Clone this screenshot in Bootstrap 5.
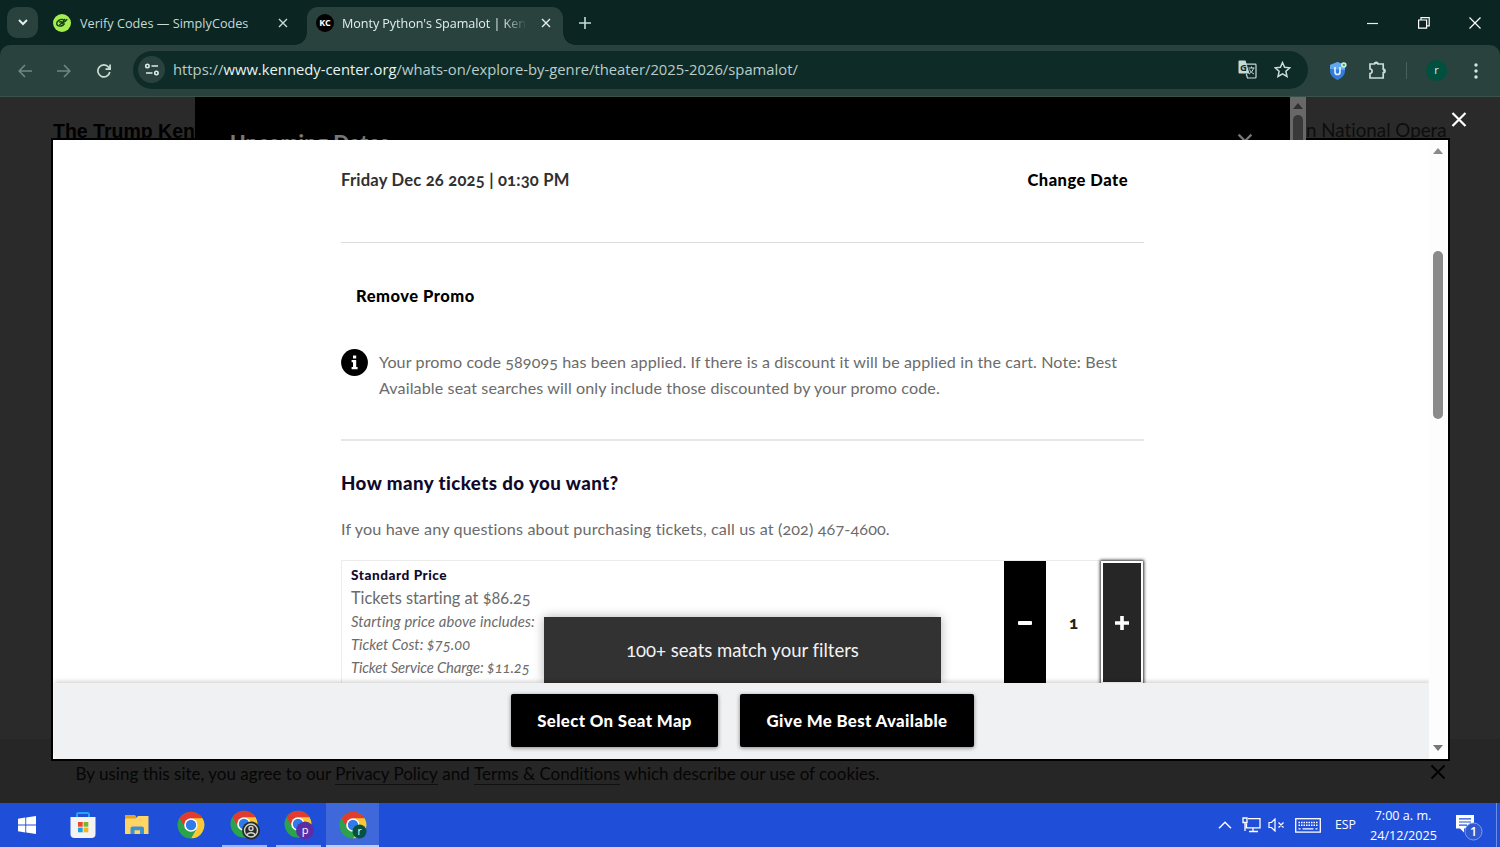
<!DOCTYPE html>
<html lang="en">
<head>
<meta charset="utf-8">
<meta name="viewport" content="width=device-width, initial-scale=1">
<title>Monty Python's Spamalot | Kennedy Center</title>
<link rel="stylesheet" href="https://cdn.jsdelivr.net/npm/bootstrap@5.3.0/dist/css/bootstrap.min.css">
<style>
  body { height: 847px; overflow: hidden; font-family: "Open Sans", "Noto Sans", sans-serif; white-space: nowrap; }
  svg { display: block; flex: none; }
  button { border: 0; }

  /* Browser chrome */
  .tabstrip { height: 45px; background: #0a2522; }
  .tab-menu { width: 31px; height: 31px; margin: 7px 0 0 7px; border-radius: 10px; background: #29423d; }
  .browser-tab { height: 38px; margin-top: 7px; font-size: 12.68px; line-height: 32px; color: #c5dbd5; }
  .tab-idle { width: 253px; margin-left: 8px; padding: 0 11px 0 7px; }
  .tab-active { width: 256px; margin-left: 8px; padding: 0 12px 0 9px; background: #29423d; color: #e2efeb; border-radius: 11px 11px 0 0; position: relative; }
  .tab-active::before, .tab-active::after { content: ""; position: absolute; bottom: 0; width: 12px; height: 12px; }
  .tab-active::before { left: -12px; background: radial-gradient(circle at 0 0, transparent 11.5px, #29423d 12px); }
  .tab-active::after { right: -12px; background: radial-gradient(circle at 100% 0, transparent 11.5px, #29423d 12px); }
  .tab-title { width: 186px; overflow: hidden; font-size: 12.6px; letter-spacing: -.06px; line-height: 33px; margin-left: 8px; -webkit-mask-image: linear-gradient(90deg, #000 160px, transparent 185px); mask-image: linear-gradient(90deg, #000 160px, transparent 185px); }
  .kc-icon { width: 18px; height: 18px; margin-top: 7px; border-radius: 50%; background: #000; color: #fff; font-size: 9px; font-weight: 700; line-height: 18px; text-align: center; }
  .toolbar-shell { height: 52px; background: #0a2522; }
  .browser-toolbar { height: 52px; background: #29423d; border-radius: 10px 10px 0 0; border-bottom: 1px solid #3a524d; }
  .address { width: 1175px; height: 38px; margin-left: 22px; margin-bottom: 2px; border-radius: 19px; background: #0f2b28; color: #b9cdc8; font-size: 14.8px; padding: 0 17px 0 5px; }
  .address strong { font-weight: 400; color: #e6f3ef; }
  .site-chip { width: 27px; height: 27px; border-radius: 50%; background: #29423d; }
  .profile { width: 21px; height: 21px; border-radius: 50%; background: #00503f; color: #dcece7; font-size: 11px; line-height: 20px; text-align: center; }
  .tool-rule { width: 1px; height: 17px; background: #49615c; }

  /* Dimmed page behind the dialog */
  .site { height: 706px; background: #2a2a2a; font-family: Lato, "Open Sans", sans-serif; font-variant-numeric: oldstyle-nums; font-variant-ligatures: none; }
  .site-head { height: 116px; }
  .brand { width: 195px; padding-left: 53px; padding-top: 20px; overflow: hidden; font: 700 19.5px/28px "Liberation Sans", Arial, sans-serif; color: #000; }
  .dates-panel { width: 1095px; height: 43px; overflow: hidden; background: #000; color: #777; padding: 30px 37px 0 35px; font-size: 21px; letter-spacing: .3px; font-weight: 900; line-height: 30px; }
  .dates-scroll { width: 16px; height: 43px; overflow: hidden; background: #686868; }
  .over-frame { position: relative; z-index: 2; }
  .dates-thumb { flex: none; width: 10px; height: 40px; border-radius: 5px 5px 0 0; background: #393939; margin-top: 6px; }
  .opera { padding-top: 19px; font-size: 18.76px; line-height: 28px; color: #0d0d0d; }
  .site-foot { height: 64px; background: #262626; padding: 25px 54px 0 75.5px; font-size: 17.03px; line-height: 28px; color: #050505; }
  .site-foot a { color: #050505; text-decoration: none; border-bottom: 1px solid #101010; display: inline-block; line-height: 20px; }

  /* Ticket dialog */
  .ticket-dialog { position: absolute; left: 51px; top: 138px; width: 1399px; height: 623px; border: 2px solid #000; background: #fff; color: #6b6b6b; }
  .dialog-close { position: absolute; left: 1451px; top: 111px; }
  .dialog-view { height: 543px; overflow: hidden; width: 1378px; }
  .ticket-column { width: 803px; margin-left: 288px; }
  .date-row { height: 103px; padding: 26px 16px 0 0; border-bottom: 1px solid #dcdcdc; font-size: 16.6px; letter-spacing: .2px; font-weight: 700; line-height: 28px; color: #303030; }
  .text-action { padding: 0; background: none; color: #000; font-size: 16.5px; letter-spacing: .5px; font-weight: 900; line-height: 28px; }
  .promo-row { height: 198px; border-bottom: 2px solid #e6e6e6; padding-top: 39px; }
  .promo-note { margin-top: 39px; gap: 11px; font-size: 16.1px; letter-spacing: .11px; line-height: 26.4px; }
  .ask { margin: 28px 0 0; font-size: 18.7px; letter-spacing: .43px; font-weight: 900; line-height: 28px; color: #0f0a2c; }
  .ask-note { margin: 19px 0 0; height: 44px; font-size: 16.2px; letter-spacing: .12px; line-height: 26px; }
  .price-box { height: 150px; border: 1px solid #ececec; }
  .price-text { padding-left: 9px; line-height: 23px; }
  .price-name { font-size: 13.6px; letter-spacing: .55px; font-weight: 900; line-height: 22px; color: #0f0a2c; padding-top: 3px; }
  .price-from { font-size: 16.36px; line-height: 24px; }
  .price-part { font-style: italic; line-height: 23.2px; font-size: 14.85px; }
  .step { width: 42px; height: 124px; background: #000; display: flex; align-items: center; justify-content: center; padding: 0; border-radius: 0; }
  .step-focus { background: #262626; width: 42px; height: 123px; border: 2px solid #fff; box-shadow: 0 0 3px 1px #333; }
  .qty { width: 55px; font-weight: 900; font-size: 17px; color: #222; text-align: center; line-height: 124px; }
  .seat-toast { position: absolute; left: 491px; top: 477px; width: 397px; height: 66px; background: #323232; color: #f2f2f2; font-size: 18.5px; line-height: 67px; text-align: center; box-shadow: 0 0 10px rgba(0,0,0,.3); }
  .dialog-foot { height: 76px; width: 1375px; margin-left: 2px; background: #eff1f3; box-shadow: 0 -2px 4px rgba(0,0,0,.16); position: relative; gap: 22px; padding-top: 11px; }
  .seat-btn { height: 53px; background: #000; color: #fff; border-radius: 2px; font-weight: 900; font-size: 16.8px; letter-spacing: .38px; padding: 1px 0 0; box-shadow: 0 1px 4px rgba(0,0,0,.45); }
  .view-scroll { position: absolute; right: 1px; top: 0; width: 18px; height: 619px; background: #fdfdfd; padding: 8px 0; }
  .view-thumb { width: 10px; height: 168px; border-radius: 5px; background: #8a8a8a; margin-top: 97px; }

  /* Taskbar */
  .taskbar { height: 44px; background: #1f4fd8; color: #fff; font-size: 12.5px; }
  .task-item { width: 53px; height: 44px; margin-right: 1px; display: flex; align-items: center; justify-content: center; }
  .task-open { border-bottom: 2px solid #9db8f3; padding-top: 2px; width: 45px; margin: 0 5px 0 4px; }
  .task-current { background: #3f69da; padding-top: 2px; border-bottom: 2px solid #bccdf7; }
  .clock { width: 66px; margin-left: 14px; text-align: center; line-height: 20px; font-size: 12.6px; padding-top: 1px; }
</style>
</head>
<body>
<svg width="0" height="0" class="position-absolute" aria-hidden="true">
  <symbol id="chrome" viewBox="0 0 28 28">
    <circle cx="14" cy="14" r="13.3" fill="#2ba24c"/>
    <path d="M14 14 2.5 7.3A13.3 13.3 0 0 1 25.5 7.3z" fill="#e33b2e"/>
    <path d="M14 7.3H25.5A13.3 13.3 0 0 1 14 27.3L19.8 17.3A6.7 6.7 0 0 0 14 7.3z" fill="#fcc934"/>
    <path d="M2.5 7.3 8.2 17.3 14 14 14 7.3z" fill="#e33b2e"/>
    <path d="M2.5 7.3A13.3 13.3 0 0 0 14 27.3L19.8 17.3 14 14 8.2 17.3z" fill="#2ba24c"/>
    <circle cx="14" cy="14" r="6.8" fill="#fff"/><circle cx="14" cy="14" r="5.2" fill="#2f7bea"/>
  </symbol>
  <symbol id="cross" viewBox="0 0 10 10"><path d="M1 1l8 8M9 1 1 9" stroke="currentColor" stroke-width="1.4" fill="none"/></symbol>
</svg>

<header>
  <div class="tabstrip d-flex">
    <div class="tab-menu d-flex align-items-center justify-content-center"><svg width="10" height="7" viewBox="0 0 10 7"><path d="M1 1l4 4 4-4" fill="none" stroke="#e2efeb" stroke-width="2"/></svg></div>
    <div class="browser-tab tab-idle d-flex">
      <svg width="18" height="18" viewBox="0 0 18 18" style="margin-top:7px"><circle cx="9" cy="9" r="9" fill="#a4ee4f"/><path d="M10.5 5.6C7 4.8 3.6 7 3.7 9.8c.2 3.1 6.1 3.2 7.8-.4M6.2 8.4c1.2-1 2.6-.8 3.6.2 1.6-.3 3.2-1.6 4.4-3.4M6.4 11l2.6-2 1.3 1.2M12 5l-2 2.5" fill="none" stroke="#173b1c" stroke-width="1.4"/></svg>
      <span style="margin-left:9px">Verify Codes — SimplyCodes</span>
      <svg class="ms-auto" width="10" height="10" style="margin-top:11px"><use href="#cross"/></svg>
    </div>
    <div class="browser-tab tab-active d-flex">
      <span class="kc-icon flex-shrink-0">KC</span>
      <span class="tab-title">Monty Python's Spamalot | Kenn</span>
      <svg class="ms-auto" width="10" height="10" style="margin-top:11px"><use href="#cross"/></svg>
    </div>
    <svg width="12" height="12" viewBox="0 0 12 12" style="margin:17px 0 0 16px"><path d="M6 0v12M0 6h12" stroke="#c5dbd5" stroke-width="1.6"/></svg>
    <div class="ms-auto d-flex" style="padding:17px 19px 0 0;gap:39px">
      <svg width="12" height="12"><path d="M0 6.5h11" stroke="#e2efeb" stroke-width="1.2"/></svg>
      <svg width="12" height="12" viewBox="0 0 12 12" fill="none" stroke="#fff" stroke-width="1.2"><path d="M.6 3h8v8.2h-8zM3 3V.6h8.2v8.2H8.6"/></svg>
      <svg width="12" height="12" viewBox="0 0 12 12"><path d="M.5.5l11 11M11.5.5l-11 11" stroke="#fff" stroke-width="1.2"/></svg>
    </div>
  </div>
  <div class="toolbar-shell">
    <div class="browser-toolbar d-flex align-items-center">
      <svg width="14" height="14" viewBox="0 0 14 14" style="margin-left:18px" fill="none" stroke="#718681" stroke-width="1.6"><path d="M14 7H1.5M7 1 1.2 7 7 13"/></svg>
      <svg width="14" height="14" viewBox="0 0 14 14" style="margin-left:25px" fill="none" stroke="#718681" stroke-width="1.6"><path d="M0 7h12.5M7 1l5.8 6L7 13"/></svg>
      <svg width="14" height="14" viewBox="0 0 14 14" style="margin-left:26px" fill="none" stroke="#c9ddd7" stroke-width="1.7"><path d="M12.8 8A6 6 0 1 1 11.6 3.2L13 4.8M13.1.5v4.6H8.5"/></svg>
      <div class="address d-flex align-items-center">
        <span class="site-chip d-flex align-items-center justify-content-center"><svg width="14" height="13" viewBox="0 0 14 13" fill="none" stroke="#dcebe6" stroke-width="1.6"><circle cx="2.4" cy="3" r="1.7"/><path d="M6.5 3H13M1 10h6.5"/><circle cx="11.4" cy="10" r="1.7"/></svg></span>
        <span style="margin-left:8px">https://<strong>www.kennedy-center.org</strong>/whats-on/explore-by-genre/theater/2025-2026/spamalot/</span>
        <svg class="ms-auto" width="19" height="19" viewBox="0 0 19 19"><path d="M1.5.5h6l4 13h-10a1 1 0 0 1-1-1v-11a1 1 0 0 1 1-1z" fill="#c9d9d5"/><path d="M8 4.2h9.2a.8.8 0 0 1 .8.8v12.2a.8.8 0 0 1-.8.8H9.5L8.3 14" fill="none" stroke="#c9d9d5" stroke-width="1.2"/><text x="2" y="10.8" font-size="9.5" font-weight="700" fill="#0f2b28">G</text><path d="M10.5 8h6M13.5 6.5V8M15.5 8c-.5 2.5-2.5 5-4.5 6M11.5 9.5c1 2 2.5 3.5 4.5 4.5" fill="none" stroke="#c9d9d5"/></svg>
        <svg style="margin-left:17px" width="17" height="17" viewBox="0 0 17 17"><path d="M8.5 1.5l2.1 4.8 5.2.5-3.9 3.5 1.1 5.2-4.5-2.7L4 15.500l1.100-5.200L1.200 6.800l5.200-.5z" fill="none" stroke="#c9ddd7" stroke-width="1.5"/></svg>
      </div>
      <svg width="18" height="20" viewBox="0 0 18 20" style="margin-left:21px"><path d="M8.5 1 16 4v6c0 4-3 7-7.5 9C4 17 1 14 1 10V4z" fill="#347cda"/><path d="M8.5 1 16 4v5L1 8V4z" fill="#62a8ef"/><path d="M6 6v5a2.500 2.500 0 0 0 5 0V6" fill="none" stroke="#dff0ff" stroke-width="1.7"/><circle cx="14.800" cy="4" r="2.800" fill="#d6efe5"/><circle cx="14.800" cy="4" r="1.200" fill="#38a97c"/></svg>
      <svg width="19" height="19" viewBox="0 0 19 19" style="margin-left:21px"><path d="M2 3h4.500a1.700 1.700 0 0 1 3.400 0h5.300v5.200a1.800 1.800 0 0 1 0 3.600V17H2v-4.500c2.800 0 2.800-4.500 0-4.500z" fill="none" stroke="#c9ddd7" stroke-width="1.7"/><path d="M6.500 3V1.300h3.400V3zM15.200 8h1.800v4h-1.800z" fill="#c9ddd7"/></svg>
      <span class="tool-rule" style="margin-left:19px"></span>
      <span class="profile" style="margin-left:19px">r</span>
      <svg class="ms-auto" width="4" height="16" style="margin-right:22px" fill="#d5e5e0"><circle cx="2" cy="2" r="1.7"/><circle cx="2" cy="8" r="1.7"/><circle cx="2" cy="14" r="1.7"/></svg>
    </div>
  </div>
</header>

<main class="site d-flex flex-column">
  <div class="site-head d-flex">
    <div class="brand">The Trump Ken</div>
    <div class="dates-panel over-frame d-flex justify-content-between"><span>Upcoming Dates</span><svg width="16" height="16" style="margin-top:6px"><use href="#cross"/></svg></div>
    <div class="dates-scroll over-frame d-flex flex-column align-items-center"><svg width="10" height="6" style="margin-top:6px"><path d="M0 6 5 0l5 6z" fill="#303030"/></svg><span class="dates-thumb"></span></div>
    <div class="opera">n National Opera</div>
  </div>
  <div class="site-foot mt-auto d-flex justify-content-between">
    <div style="margin-top:-4px">By using this site, you agree to our <a>Privacy Policy</a> and <a>Terms &amp; Conditions</a> which describe our use of cookies.</div>
    <svg width="16" height="16"><path d="M1.5 1.5l13 13M14.500 1.500l-13 13" stroke="#000" stroke-width="2"/></svg>
  </div>
</main>

<footer class="taskbar d-flex">
  <span class="task-item"><svg width="18" height="18" viewBox="0 0 18 18" fill="#fff"><path d="M0 2.700 7.300 1.600v7H0zM8.200 1.500 18 0v8.600H8.200zM0 9.400h7.300v7L0 15.300zM8.200 9.400H18V18l-9.800-1.500z"/></svg></span>
  <span class="task-item" style="margin-left:2px"><svg width="26" height="28" viewBox="0 0 26 28"><path d="M7 7V3.200A1.500 1.500 0 0 1 8.500 2h9A1.500 1.500 0 0 1 19 3.200V7" fill="none" stroke="#22a6ee" stroke-width="2"/><path d="M.5 6h25v17a4 4 0 0 1-4 4h-17a4 4 0 0 1-4-4z" fill="#f3f3f3"/><path d="M8 11h4.700v4.700H8z" fill="#e5492b"/><path d="M13.600 11h4.700v4.700h-4.700z" fill="#7db526"/><path d="M8 16.600h4.700v4.700H8z" fill="#1ba0e0"/><path d="M13.600 16.600h4.700v4.700h-4.700z" fill="#f6b51d"/></svg></span>
  <span class="task-item"><svg width="24" height="20" viewBox="0 0 24 20"><path d="M0 0h10l2 3v4H0z" fill="#e5a320"/><path d="M1 3.500h10L13 1h10.500v18H0V5z" fill="#ffd566"/><path d="M5.500 19v-5.500a2 2 0 0 1 2-2h9.500a2 2 0 0 1 2 2V19h-4v-3.700H9.500V19z" fill="#3d92d4"/></svg></span>
  <span class="task-item"><svg width="28" height="28"><use href="#chrome"/></svg></span>
  <span class="task-item task-open"><svg width="30" height="30" viewBox="0 0 30 30"><svg width="28" height="28"><use href="#chrome"/></svg><circle cx="21" cy="20.500" r="9" fill="#252b2a"/><circle cx="21" cy="20.500" r="6.500" fill="none" stroke="#d4d5ca" stroke-width="1.4"/><circle cx="21" cy="18.500" r="2" fill="none" stroke="#d4d5ca" stroke-width="1.4"/><path d="M16.800 25c1.500-3 7-3 8.400 0" fill="none" stroke="#d4d5ca" stroke-width="1.4"/></svg></span>
  <span class="task-item task-open"><svg width="30" height="30" viewBox="0 0 30 30"><svg width="28" height="28"><use href="#chrome"/></svg><circle cx="21" cy="20.500" r="9" fill="#5b2ea6"/><text x="21" y="24" text-anchor="middle" font-size="11" fill="#fff">p</text></svg></span>
  <span class="task-item task-current"><svg width="28" height="28" viewBox="0 0 28 28"><use href="#chrome"/><circle cx="20.500" cy="20.500" r="7" fill="#07513f"/><text x="20.500" y="24" text-anchor="middle" font-size="10" fill="#fff">r</text></svg></span>
  <div class="ms-auto d-flex align-items-center">
    <svg width="14" height="8" viewBox="0 0 14 8"><path d="M1 7.200l6-6 6 6" fill="none" stroke="#fff" stroke-width="1.4"/></svg>
    <svg style="margin-left:10px" width="19" height="16" viewBox="0 0 19 16" fill="none" stroke="#fff" stroke-width="1.3"><path d="M6 1.600h12v9.200H4.500V6.500M1 1h4v4.500H1zM3 5.500V14M11 11v3.500M7 14.500h9"/></svg>
    <svg style="margin-left:7px" width="17" height="14" viewBox="0 0 17 14" fill="none" stroke="#fff" stroke-width="1.2"><path d="M1 4.500h2.500L7 1v12L3.500 9.500H1zM10.500 4.500l5 5M15.500 4.500l-5 5"/></svg>
    <svg style="margin-left:10px" width="26" height="15" viewBox="0 0 26 15" fill="none" stroke="#fff"><rect x=".7" y=".7" width="24.600" height="13.400" stroke-width="1.3"/><path d="M3.500 4.500h19M3.500 7.300h19" stroke-width="1.5" stroke-dasharray="1.500 1"/><path d="M3.500 10.800h2M7.500 10.800h11M20.500 10.800h2" stroke-width="1.3"/></svg>
    <span style="margin-left:14px;font-size:12.3px">ESP</span>
    <div class="clock">7:00 a. m.<br>24/12/2025</div>
    <svg style="margin:5px 13px 0 19px" width="28" height="28" viewBox="0 0 28 28"><path d="M1 1h18v13.500H9v4l-4-4H1z" fill="#fff"/><path d="M4 4.800h12M4 8h12M4 11.200h8" stroke="#1f4fd8" stroke-width="1.2"/><circle cx="18.500" cy="17.500" r="8.500" fill="#2f59cd" stroke="#7f9be8"/><text x="18.500" y="22" text-anchor="middle" font-size="12.5" font-weight="600" fill="#fff">1</text></svg>
    <span style="width:1px;height:44px;margin-right:3px;background:#6c8de6"></span>
  </div>
</footer>

<svg class="dialog-close" width="16" height="16"><path d="M1.5 2l13 13M14.5 2l-13 13" stroke="#fff" stroke-width="2.2"/></svg>
<section class="ticket-dialog" style="font-family:Lato,'Open Sans',sans-serif;font-variant-numeric:oldstyle-nums;font-variant-ligatures:none">
  <div class="dialog-view">
    <div class="ticket-column">
      <div class="date-row d-flex justify-content-between"><span>Friday Dec 26 2025 | 01:30 PM</span><button class="text-action align-self-start">Change Date</button></div>
      <div class="promo-row">
        <button class="text-action" style="margin-left:15px;display:block">Remove Promo</button>
        <div class="promo-note d-flex">
          <svg width="27" height="27" viewBox="0 0 27 27"><circle cx="13.500" cy="13.500" r="13.400"/><path d="M12 6.500h3.200v3H12zM10.600 11h4.600v7h1.400v2.200h-6V18H12v-4.800h-1.400z" fill="#fff"/></svg>
          <div>Your promo code 589095 has been applied. If there is a discount it will be applied in the cart. Note: Best<br>Available seat searches will only include those discounted by your promo code.</div>
        </div>
      </div>
      <h2 class="ask">How many tickets do you want?</h2>
      <p class="ask-note">If you have any questions about purchasing tickets, call us at (202) 467-4600.</p>
      <div class="price-box d-flex">
        <div class="price-text">
          <div class="price-name">Standard Price</div>
          <div class="price-from">Tickets starting at $86.25</div>
          <div class="price-part" style="letter-spacing:.13px">Starting price above includes:</div>
          <div class="price-part">Ticket Cost: $75.00</div>
          <div class="price-part" style="letter-spacing:-.14px">Ticket Service Charge: $11.25</div>
        </div>
        <button class="step ms-auto"><svg width="14" height="4"><rect width="14" height="4" rx="1" fill="#fff"/></svg></button>
        <div class="qty">1</div>
        <button class="step step-focus"><svg width="14" height="14"><path d="M5.200 0h3.600v5.200H14v3.600H8.800V14H5.200V8.800H0V5.200h5.200z" fill="#fff"/></svg></button>
      </div>
    </div>
  </div>
  <div class="seat-toast">100+ seats match your filters</div>
  <div class="dialog-foot d-flex justify-content-center">
    <button class="seat-btn" style="width:207px">Select On Seat Map</button>
    <button class="seat-btn" style="width:234px">Give Me Best Available</button>
  </div>
  <div class="view-scroll d-flex flex-column align-items-center">
    <svg width="10" height="6"><path d="M0 6 5 0l5 6z" fill="#8a8a8a"/></svg>
    <span class="view-thumb"></span>
    <svg class="mt-auto" width="10" height="6"><path d="M0 0l5 6 5-6z" fill="#777"/></svg>
  </div>
</section>
<script src="https://cdn.jsdelivr.net/npm/bootstrap@5.3.0/dist/js/bootstrap.bundle.min.js"></script>
</body>
</html>
